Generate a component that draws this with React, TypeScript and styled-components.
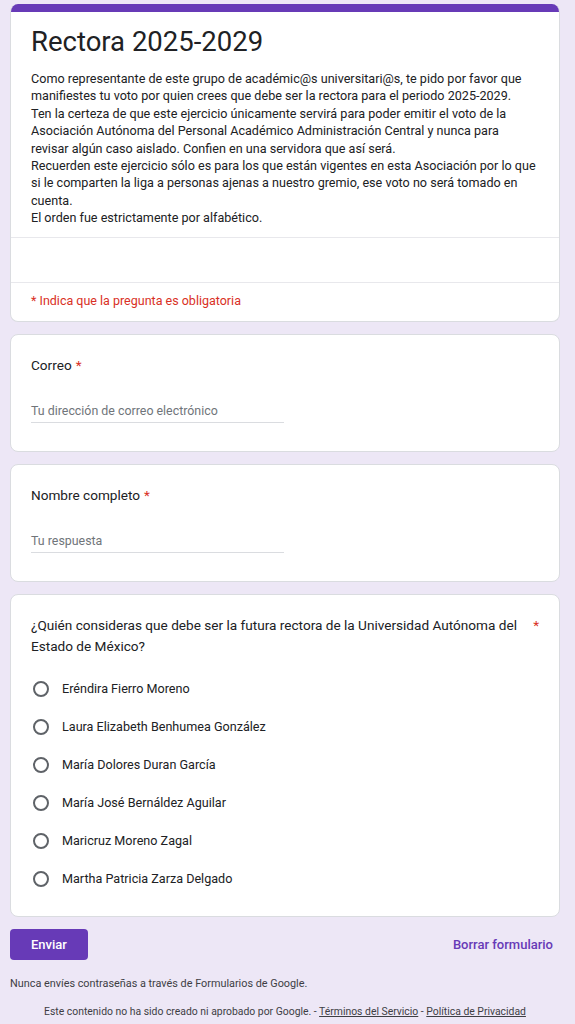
import React from "react";
import styled, { createGlobalStyle } from "styled-components";

const Global = createGlobalStyle`
  html, body { margin: 0; padding: 0; background: #ede7f6; }
  body { font-family: Roboto, "Noto Sans", Arial, sans-serif; color: #202124; }
  * { box-sizing: border-box; }
`;

const Page = styled.div`
  padding: 4px 15px 0 10px;
  display: flex;
  flex-direction: column;
  gap: 12px;
`;

const Card = styled.div`
  background: #fff;
  border: 1px solid #dadce0;
  border-radius: 8px;
  overflow: hidden;
`;

const HeaderCard = styled(Card)`
  border-top: none;
`;

const TopBar = styled.div`
  height: 8px;
  background: #673ab7;
`;

const HeaderBody = styled.div`
  padding: 14px 20px 10px;
`;

const Title = styled.h1`
  margin: 0;
  font-size: 27.5px;
  line-height: 32px;
  font-weight: 400;
  color: #202124;
`;

const Description = styled.div`
  margin-top: 12px;
  font-size: 12.6px;
  line-height: 17.4px;
  color: #202124;
  white-space: pre-line;
`;

const Section = styled.div<{ $h?: number }>`
  border-top: 1px solid #e8e8ec;
  height: ${(p) => (p.$h ? `${p.$h}px` : "auto")};
  padding: 0 20px 3px;
  display: flex;
  align-items: center;
`;

const RequiredNote = styled.span`
  color: #d93025;
  font-size: 12.5px;
`;

const QuestionCard = styled(Card)`
  padding: 20px 20px 0;
`;

const QuestionRow = styled.div`
  display: flex;
  gap: 8px;
  font-size: 13.6px;
  line-height: 21px;
  color: #202124;
`;

const QuestionText = styled.div`
  flex: 1;
`;

const Star = styled.span`
  color: #d93025;
  margin-left: 4px;
`;

const SideStar = styled.span`
  color: #d93025;
`;

const InputWrap = styled.div`
  width: 253px;
  margin-top: 27px;
  margin-bottom: 28px;
  border-bottom: 1px solid #dadce0;
  padding-bottom: 3px;
  font-size: 12.4px;
  line-height: 16px;
  color: #70757a;
`;

const Options = styled.div`
  display: flex;
  flex-direction: column;
  margin-top: 13px;
  padding-bottom: 18px;
`;

const Option = styled.label`
  display: flex;
  align-items: center;
  height: 38px;
  font-size: 12.6px;
  color: #202124;
`;

const Radio = styled.span`
  width: 16px;
  height: 16px;
  border: 2px solid #5f6368;
  border-radius: 50%;
  margin-left: 2px;
  margin-right: 13px;
  flex: none;
`;

const Actions = styled.div`
  display: flex;
  justify-content: space-between;
  align-items: center;
`;

const SubmitButton = styled.button`
  width: 78px;
  height: 31px;
  background: #673ab7;
  color: #fff;
  border: none;
  border-radius: 4px;
  font-family: inherit;
  font-size: 13px;
  font-weight: 500;
`;

const ClearLink = styled.span`
  color: #673ab7;
  font-size: 13px;
  font-weight: 500;
  margin-right: 7px;
`;

const Note = styled.div`
  font-size: 10.85px;
  color: #202124;
  opacity: 0.85;
  margin-top: 5px;
`;

const Footer = styled.div`
  text-align: center;
  font-size: 10.4px;
  color: #202124;
  opacity: 0.85;
  margin-top: 3px;
`;

const FootLink = styled.a`
  color: inherit;
  text-decoration: underline;
`;

const options = [
  "Eréndira Fierro Moreno",
  "Laura Elizabeth Benhumea González",
  "María Dolores Duran García",
  "María José Bernáldez Aguilar",
  "Maricruz Moreno Zagal",
  "Martha Patricia Zarza Delgado",
];

const description = `Como representante de este grupo de académic@s universitari@s, te pido por favor que manifiestes tu voto por quien crees que debe ser la rectora para el periodo 2025-2029.
Ten la certeza de que este ejercicio únicamente servirá para poder emitir el voto de la Asociación Autónoma del Personal Académico Administración Central y nunca para revisar algún caso aislado. Confien en una servidora que así será.
Recuerden este ejercicio sólo es para los que están vigentes en esta Asociación por lo que si le comparten la liga a personas ajenas a nuestro gremio, ese voto no será tomado en cuenta.
El orden fue estrictamente por alfabético.`;

export default function App() {
  return (
    <>
      <Global />
      <Page>
        <HeaderCard>
          <TopBar />
          <HeaderBody>
            <Title>Rectora 2025-2029</Title>
            <Description>{description}</Description>
          </HeaderBody>
          <Section $h={45} />
          <Section $h={39}>
            <RequiredNote>* Indica que la pregunta es obligatoria</RequiredNote>
          </Section>
        </HeaderCard>

        <QuestionCard>
          <QuestionRow>
            <QuestionText>
              Correo<Star>*</Star>
            </QuestionText>
          </QuestionRow>
          <InputWrap>Tu dirección de correo electrónico</InputWrap>
        </QuestionCard>

        <QuestionCard>
          <QuestionRow>
            <QuestionText>
              Nombre completo<Star>*</Star>
            </QuestionText>
          </QuestionRow>
          <InputWrap>Tu respuesta</InputWrap>
        </QuestionCard>

        <QuestionCard>
          <QuestionRow>
            <QuestionText>
              ¿Quién consideras que debe ser la futura rectora de la Universidad Autónoma del Estado de México?
            </QuestionText>
            <SideStar>*</SideStar>
          </QuestionRow>
          <Options>
            {options.map((o) => (
              <Option key={o}>
                <Radio />
                {o}
              </Option>
            ))}
          </Options>
        </QuestionCard>

        <Actions>
          <SubmitButton>Enviar</SubmitButton>
          <ClearLink>Borrar formulario</ClearLink>
        </Actions>

        <Note>Nunca envíes contraseñas a través de Formularios de Google.</Note>
        <Footer>
          Este contenido no ha sido creado ni aprobado por Google. - <FootLink>Términos del Servicio</FootLink> - <FootLink>Política de Privacidad</FootLink>
        </Footer>
      </Page>
    </>
  );
}
